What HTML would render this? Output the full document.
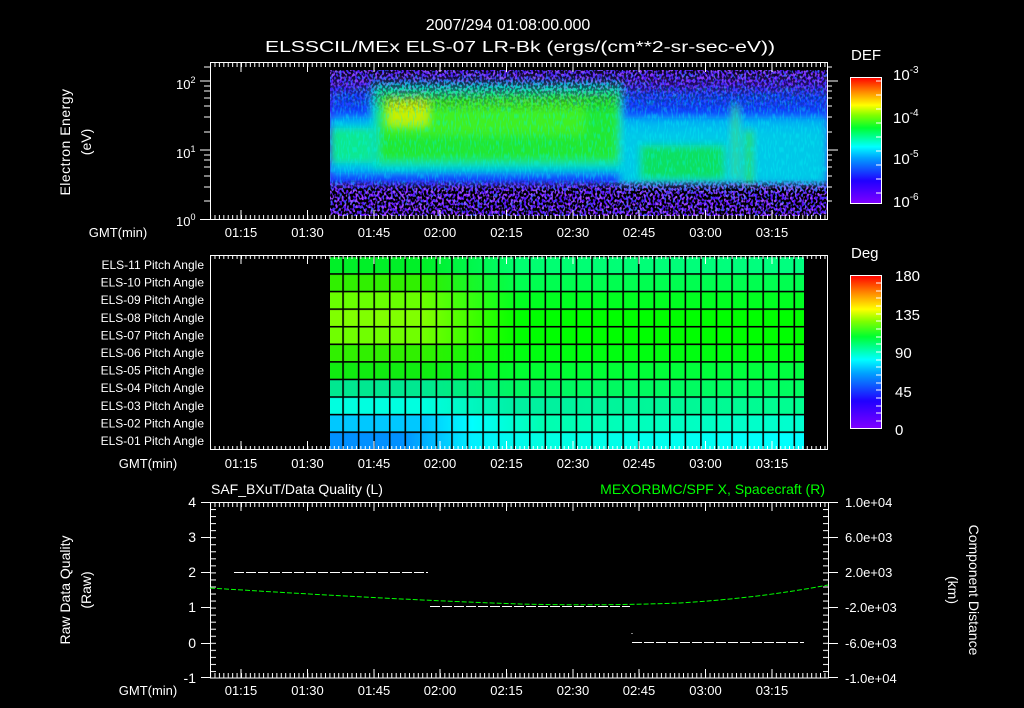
<!DOCTYPE html>
<html><head><meta charset="utf-8"><style>
html,body{margin:0;padding:0;background:#000;width:1024px;height:708px;overflow:hidden}
svg{display:block}
text{font-family:"Liberation Sans",sans-serif;fill:#fff}
</style></head><body>
<svg width="1024" height="708" viewBox="0 0 1024 708" xmlns="http://www.w3.org/2000/svg">
<defs>
<linearGradient id="cb" x1="0" y1="1" x2="0" y2="0">
<stop offset="0" stop-color="#8000ff"/><stop offset="0.18" stop-color="#2000ff"/>
<stop offset="0.36" stop-color="#00a0ff"/><stop offset="0.45" stop-color="#00ffff"/>
<stop offset="0.6" stop-color="#00ff30"/><stop offset="0.7" stop-color="#80ff00"/>
<stop offset="0.78" stop-color="#ffff00"/><stop offset="0.88" stop-color="#ff9000"/>
<stop offset="1" stop-color="#ff0000"/></linearGradient>
<pattern id="tmin" patternUnits="userSpaceOnUse" x="241" y="0" width="4.42" height="708">
<rect x="0" y="0" width="1" height="708" fill="#fff"/></pattern>
<pattern id="ymin" patternUnits="userSpaceOnUse" x="0" y="502" width="1024" height="7.04">
<rect x="0" y="0" width="1024" height="1" fill="#fff"/></pattern>
<filter id="bl"><feGaussianBlur stdDeviation="4"/></filter>
<filter id="noise" x="0" y="0" width="100%" height="100%">
<feTurbulence type="fractalNoise" baseFrequency="0.45 0.35" numOctaves="1" seed="3"/>
<feColorMatrix type="matrix" values="0 0 0 0 0  0 0 0 0 0  0 0 0 0 0  0 0 0 -9 5"/>
</filter>
<filter id="noise2" x="0" y="0" width="100%" height="100%">
<feTurbulence type="fractalNoise" baseFrequency="0.5 0.3" numOctaves="1" seed="7"/>
<feColorMatrix type="matrix" values="0 0 0 0 0.55  0 0 0 0 0.1  0 0 0 0 1  0 0 0 -8 4.2"/>
</filter>
<filter id="noise3" x="0" y="0" width="100%" height="100%">
<feTurbulence type="fractalNoise" baseFrequency="0.6 0.15" numOctaves="1" seed="11"/>
<feColorMatrix type="matrix" values="0 0 0 0 0  0 0 0 0 0.9  0 0 0 0 0.9  0 0 0 -6 3"/>
</filter>
<linearGradient id="nm" x1="0" y1="0" x2="0" y2="1">
<stop offset="0" stop-color="#fff" stop-opacity="0.9"/><stop offset="0.15" stop-color="#fff" stop-opacity="0.4"/>
<stop offset="0.3" stop-color="#fff" stop-opacity="0"/><stop offset="0.75" stop-color="#fff" stop-opacity="0"/>
<stop offset="0.82" stop-color="#fff" stop-opacity="1"/><stop offset="1" stop-color="#fff" stop-opacity="1"/></linearGradient>
<mask id="m1"><rect x="330" y="70" width="498" height="146" fill="url(#nm)"/></mask>
<clipPath id="c1"><rect x="330" y="70" width="498" height="146"/></clipPath>
</defs>

<text x="508" y="30" font-size="16" text-anchor="middle">2007/294 01:08:00.000</text>
<text x="520" y="52" font-size="16" text-anchor="middle" textLength="510" lengthAdjust="spacingAndGlyphs">ELSSCIL/MEx ELS-07 LR-Bk  (ergs/(cm**2-sr-sec-eV))</text>

<g clip-path="url(#c1)">
<rect x="330" y="70" width="498" height="146" fill="#4818f0"/>
<g filter="url(#bl)">
<rect x="330" y="90" width="498" height="95" fill="#1040ff"/>
<rect x="330" y="118" width="498" height="55" fill="#00b8f0"/>
<rect x="330" y="128" width="50" height="35" fill="#10e890"/>
<rect x="372" y="82" width="250" height="88" fill="#00d8c0"/>
<rect x="378" y="92" width="242" height="70" fill="#20e830"/>
<rect x="385" y="100" width="200" height="35" fill="#40f020"/>
<rect x="388" y="100" width="40" height="25" fill="#c8f000"/>
<rect x="620" y="130" width="208" height="55" fill="#00c8e8"/>
<rect x="640" y="145" width="85" height="35" fill="#10e060"/>
<rect x="733" y="105" width="5" height="75" fill="#30e030"/>
<rect x="745" y="130" width="8" height="55" fill="#20e040"/>
<rect x="330" y="187" width="498" height="35" fill="#5010f0"/>
</g>
<rect x="330" y="70" width="498" height="146" filter="url(#noise3)" opacity="0.35"/>
<rect x="330" y="70" width="498" height="146" filter="url(#noise2)" opacity="0.7" mask="url(#m1)"/>
<rect x="330" y="70" width="498" height="146" filter="url(#noise)" mask="url(#m1)"/>
</g>
<rect x="210.5" y="62.5" width="617" height="157" fill="none" stroke="#fff"/>
<rect x="210" y="62" width="618" height="5" fill="url(#tmin)"/>
<rect x="210" y="215" width="618" height="5" fill="url(#tmin)"/>
<g stroke="#fff">
<path d="M241 62v10M307.5 62v10M374 62v10M440 62v10M506.5 62v10M573 62v10M639 62v10M705.5 62v10M772 62v10"/>
<path d="M241 220v-10M307.5 220v-10M374 220v-10M440 220v-10M506.5 220v-10M573 220v-10M639 220v-10M705.5 220v-10M772 220v-10"/>
<path d="M200 81h10M200 150h10M200 219.5h10M204 201h6M204 187h6M204 176h6M204 167h6M204 160h6M204 155h6M204 132h6M204 117h6M204 106h6M204 98h6M204 91h6M204 86h6M204 67h6"/>
<path d="M838 81h-10M838 150h-10M832 201h-4M832 187h-4M832 176h-4M832 167h-4M832 160h-4M832 155h-4M832 132h-4M832 117h-4M832 106h-4M832 98h-4M832 91h-4M832 86h-4M832 67h-4"/>
</g>
<text x="176" y="89" font-size="13">10<tspan font-size="9" dy="-6">2</tspan></text>
<text x="176" y="158" font-size="13">10<tspan font-size="9" dy="-6">1</tspan></text>
<text x="176" y="226" font-size="13">10<tspan font-size="9" dy="-6">0</tspan></text>
<text transform="translate(70,142) rotate(-90)" font-size="14" text-anchor="middle" letter-spacing="0.5">Electron Energy</text>
<text transform="translate(91,142) rotate(-90)" font-size="14" text-anchor="middle">(eV)</text>
<g font-size="13" text-anchor="middle">
<text x="118" y="237">GMT(min)</text>
<text x="241" y="237">01:15</text><text x="307.5" y="237">01:30</text><text x="374" y="237">01:45</text>
<text x="440" y="237">02:00</text><text x="506.5" y="237">02:15</text><text x="573" y="237">02:30</text>
<text x="639" y="237">02:45</text><text x="705.5" y="237">03:00</text><text x="772" y="237">03:15</text>
</g>
<text x="851" y="60" font-size="15">DEF</text>
<rect x="850.5" y="77.5" width="31" height="126" fill="url(#cb)" stroke="#fff"/>
<g stroke="#fff"><path d="M876 81h6M876 95h6M876 109h6M876 123h6M876 137h6M876 151h6M876 165h6M876 179h6M876 193h6"/></g>
<g font-size="15"><text x="893" y="80">10<tspan font-size="10" dy="-7">-3</tspan></text>
<text x="893" y="123">10<tspan font-size="10" dy="-7">-4</tspan></text>
<text x="893" y="164">10<tspan font-size="10" dy="-7">-5</tspan></text>
<text x="893" y="207">10<tspan font-size="10" dy="-7">-6</tspan></text></g>

<g>
<linearGradient id="r1" x1="330" x2="804" gradientUnits="userSpaceOnUse"><stop offset="0.2" stop-color="#00f028"/><stop offset="0.4" stop-color="#00ff70"/><stop offset="1" stop-color="#00ff80"/></linearGradient>
<linearGradient id="r2" x1="330" x2="804" gradientUnits="userSpaceOnUse"><stop offset="0.2" stop-color="#30f000"/><stop offset="0.4" stop-color="#00ff50"/><stop offset="1" stop-color="#00ff50"/></linearGradient>
<linearGradient id="r3" x1="330" x2="804" gradientUnits="userSpaceOnUse"><stop offset="0.2" stop-color="#68ff00"/><stop offset="0.4" stop-color="#00ff20"/><stop offset="1" stop-color="#00ff20"/></linearGradient>
<linearGradient id="r4" x1="330" x2="804" gradientUnits="userSpaceOnUse"><stop offset="0.2" stop-color="#80ff00"/><stop offset="0.4" stop-color="#00ff00"/><stop offset="1" stop-color="#00ff00"/></linearGradient>
<linearGradient id="r5" x1="330" x2="804" gradientUnits="userSpaceOnUse"><stop offset="0.2" stop-color="#70ff00"/><stop offset="0.4" stop-color="#00ff00"/><stop offset="1" stop-color="#00ff00"/></linearGradient>
<linearGradient id="r6" x1="330" x2="804" gradientUnits="userSpaceOnUse"><stop offset="0.2" stop-color="#30f000"/><stop offset="0.4" stop-color="#00ff10"/><stop offset="1" stop-color="#00ff10"/></linearGradient>
<linearGradient id="r7" x1="330" x2="804" gradientUnits="userSpaceOnUse"><stop offset="0.2" stop-color="#10ec10"/><stop offset="0.4" stop-color="#00ff30"/><stop offset="1" stop-color="#00ff40"/></linearGradient>
<linearGradient id="r8" x1="330" x2="804" gradientUnits="userSpaceOnUse"><stop offset="0.2" stop-color="#00e890"/><stop offset="0.4" stop-color="#00f860"/><stop offset="1" stop-color="#00ff60"/></linearGradient>
<linearGradient id="r9" x1="330" x2="804" gradientUnits="userSpaceOnUse"><stop offset="0.2" stop-color="#00ffe0"/><stop offset="0.4" stop-color="#00f0a0"/><stop offset="1" stop-color="#00ff90"/></linearGradient>
<linearGradient id="r10" x1="330" x2="804" gradientUnits="userSpaceOnUse"><stop offset="0.2" stop-color="#00c8ff"/><stop offset="0.3" stop-color="#00ffff"/><stop offset="0.45" stop-color="#00ffb0"/><stop offset="1" stop-color="#00ffd0"/></linearGradient>
<linearGradient id="r11" x1="330" x2="804" gradientUnits="userSpaceOnUse"><stop offset="0.15" stop-color="#0090ff"/><stop offset="0.3" stop-color="#00f0ff"/><stop offset="0.45" stop-color="#00ffe0"/><stop offset="1" stop-color="#00ffff"/></linearGradient>
<pattern id="gx" patternUnits="userSpaceOnUse" x="326.7" y="0" width="15.56" height="708"><rect width="1.6" height="708" fill="#000"/></pattern>
<pattern id="gy" patternUnits="userSpaceOnUse" x="0" y="255.6" width="1024" height="17.58"><rect width="1024" height="1.6" fill="#000"/></pattern>
</g>
<rect x="330" y="256" width="474" height="17.6" fill="url(#r1)"/>
<rect x="330" y="273.6" width="474" height="17.6" fill="url(#r2)"/>
<rect x="330" y="291.2" width="474" height="17.6" fill="url(#r3)"/>
<rect x="330" y="308.8" width="474" height="17.6" fill="url(#r4)"/>
<rect x="330" y="326.4" width="474" height="17.6" fill="url(#r5)"/>
<rect x="330" y="344" width="474" height="17.6" fill="url(#r6)"/>
<rect x="330" y="361.6" width="474" height="17.6" fill="url(#r7)"/>
<rect x="330" y="379.2" width="474" height="17.6" fill="url(#r8)"/>
<rect x="330" y="396.8" width="474" height="17.6" fill="url(#r9)"/>
<rect x="330" y="414.4" width="474" height="17.6" fill="url(#r10)"/>
<rect x="330" y="432" width="474" height="17.6" fill="url(#r11)"/>
<rect x="330" y="256" width="474" height="194" fill="url(#gx)"/>
<rect x="330" y="256" width="474" height="194" fill="url(#gy)"/>
<rect x="210.5" y="255.5" width="617" height="194" fill="none" stroke="#fff"/>
<rect x="210" y="255" width="618" height="4" fill="url(#tmin)"/>
<rect x="210" y="446" width="618" height="4" fill="url(#tmin)"/>
<g stroke="#fff">
<path d="M241 255v9M307.5 255v9M374 255v9M440 255v9M506.5 255v9M573 255v9M639 255v9M705.5 255v9M772 255v9"/>
<path d="M241 450v-9M307.5 450v-9M374 450v-9M440 450v-9M506.5 450v-9M573 450v-9M639 450v-9M705.5 450v-9M772 450v-9"/>
</g>
<g font-size="12" text-anchor="end">
<text x="204" y="269">ELS-11 Pitch Angle</text><text x="204" y="286.6">ELS-10 Pitch Angle</text>
<text x="204" y="304.2">ELS-09 Pitch Angle</text><text x="204" y="321.8">ELS-08 Pitch Angle</text>
<text x="204" y="339.4">ELS-07 Pitch Angle</text><text x="204" y="357">ELS-06 Pitch Angle</text>
<text x="204" y="374.6">ELS-05 Pitch Angle</text><text x="204" y="392.2">ELS-04 Pitch Angle</text>
<text x="204" y="409.8">ELS-03 Pitch Angle</text><text x="204" y="427.4">ELS-02 Pitch Angle</text>
<text x="204" y="445">ELS-01 Pitch Angle</text></g>
<g font-size="13" text-anchor="middle">
<text x="148" y="468">GMT(min)</text>
<text x="241" y="468">01:15</text><text x="307.5" y="468">01:30</text><text x="374" y="468">01:45</text>
<text x="440" y="468">02:00</text><text x="506.5" y="468">02:15</text><text x="573" y="468">02:30</text>
<text x="639" y="468">02:45</text><text x="705.5" y="468">03:00</text><text x="772" y="468">03:15</text>
</g>
<text x="851" y="258" font-size="15">Deg</text>
<rect x="850.5" y="275.5" width="31" height="153" fill="url(#cb)" stroke="#fff"/>
<g stroke="#fff"><path d="M876 283h6M876 291h6M876 298h6M876 306h6M876 314h6M876 321h6M876 329h6M876 337h6M876 344h6M876 352h6M876 360h6M876 367h6M876 375h6M876 383h6M876 390h6M876 398h6M876 406h6M876 413h6M876 421h6"/></g>
<g font-size="15"><text x="895" y="281">180</text><text x="895" y="320">135</text><text x="895" y="358">90</text><text x="895" y="397">45</text><text x="895" y="435">0</text></g>

<text x="211" y="494" font-size="14">SAF_BXuT/Data Quality (L)</text>
<text x="825" y="494" font-size="14" text-anchor="end" style="fill:#00ff00">MEXORBMC/SPF X, Spacecraft (R)</text>
<rect x="210.5" y="502.5" width="618" height="175.5" fill="none" stroke="#fff"/>
<rect x="210" y="502" width="618" height="5" fill="url(#tmin)"/>
<rect x="210" y="673" width="618" height="5" fill="url(#tmin)"/>
<rect x="210" y="502" width="6" height="176" fill="url(#ymin)"/>
<rect x="823" y="502" width="6" height="176" fill="url(#ymin)"/>
<g stroke="#fff">
<path d="M241 502v9M307.5 502v9M374 502v9M440 502v9M506.5 502v9M573 502v9M639 502v9M705.5 502v9M772 502v9"/>
<path d="M241 678v-9M307.5 678v-9M374 678v-9M440 678v-9M506.5 678v-9M573 678v-9M639 678v-9M705.5 678v-9M772 678v-9"/>
<path d="M201 502.5h9M201 537.5h9M201 572.5h9M201 607.5h9M201 643.5h9M201 677.5h9"/>
<path d="M829 502.5h9M829 537.5h9M829 572.5h9M829 607.5h9M829 643.5h9M829 677.5h9"/>
<path d="M234 572.5H428M430 606.5H630M632 642.5H804" stroke-dasharray="10 2"/>
<path d="M632 633v1"/>
</g>
<path d="M210 588 Q 400 600 520 604 Q 600 606 680 603 Q 760 598 828 585" fill="none" stroke="#00ff00" stroke-dasharray="5 2"/>
<g font-size="14" text-anchor="end"><text x="196" y="507">4</text><text x="196" y="542">3</text><text x="196" y="577">2</text><text x="196" y="612">1</text><text x="196" y="648">0</text><text x="196" y="683">-1</text></g>
<g font-size="13"><text x="845" y="507">1.0e+04</text><text x="845" y="542">6.0e+03</text><text x="845" y="577">2.0e+03</text><text x="845" y="612">-2.0e+03</text><text x="845" y="648">-6.0e+03</text><text x="845" y="683">-1.0e+04</text></g>
<text transform="translate(70,590) rotate(-90)" font-size="14" text-anchor="middle">Raw Data Quality</text>
<text transform="translate(91,590) rotate(-90)" font-size="14" text-anchor="middle">(Raw)</text>
<text transform="translate(969,590) rotate(90)" font-size="14" text-anchor="middle">Component Distance</text>
<text transform="translate(948,590) rotate(90)" font-size="14" text-anchor="middle">(km)</text>
<g font-size="13" text-anchor="middle">
<text x="148" y="695">GMT(min)</text>
<text x="241" y="695">01:15</text><text x="307.5" y="695">01:30</text><text x="374" y="695">01:45</text>
<text x="440" y="695">02:00</text><text x="506.5" y="695">02:15</text><text x="573" y="695">02:30</text>
<text x="639" y="695">02:45</text><text x="705.5" y="695">03:00</text><text x="772" y="695">03:15</text>
</g>
</svg>
</body></html>
